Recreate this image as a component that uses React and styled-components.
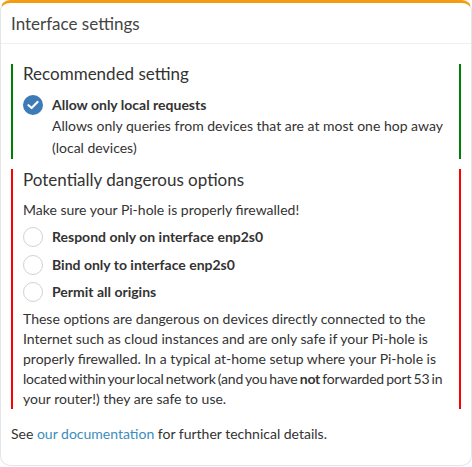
import React from "react"
import styled, { createGlobalStyle } from "styled-components"

const Global = createGlobalStyle`
  body {
    margin: 0;
    background: #fff;
    font-family: Lato, "Liberation Sans", sans-serif;
    font-size: 14px;
    color: #333;
  }
`

const S = {
  Box: styled.div`
    box-sizing: border-box;
    width: 472px;
    height: 466px;
    border: 1px solid #e3e5e9;
    border-top: 3px solid #f39c12;
    border-radius: 10px;
    background: #fff;
  `,
  Header: styled.div`
    height: 40px;
    padding: 0 10px;
    display: flex;
    align-items: center;
    border-bottom: 1px solid #f0f0f0;
    font-size: 17px;
    color: #444;
  `,
  Body: styled.div`
    padding: 20px 10px 20px;
  `,
  Fieldset: styled.div`
    border-left: 2px solid ${(p) => p.$color};
    border-right: 2px solid ${(p) => p.$color};
    padding: ${(p) => (p.$pt || 0)}px 10px 0;
    margin-bottom: ${(p) => p.$mb || 0}px;
  `,
  Legend: styled.div`
    font-size: 17px;
    line-height: 20px;
    color: #333;
  `,
  Note: styled.div`
    margin-top: 10px;
    line-height: 20px;
  `,
  Option: styled.label`
    display: flex;
    align-items: flex-start;
    gap: 9px;
    margin-top: ${(p) => p.$mt}px;
  `,
  Circle: styled.span`
    box-sizing: border-box;
    flex: none;
    width: 20px;
    height: 20px;
    border-radius: 50%;
    border: ${(p) => (p.$checked ? "none" : "1px solid #d2d2d2")};
    background: ${(p) => (p.$checked ? "#3c7ab8" : "#fff")};
    display: flex;
    align-items: center;
    justify-content: center;
  `,
  Label: styled.div`
    line-height: 20px;
    b {
      font-weight: 700;
      color: #333;
    }
  `,
  Desc: styled.div`
    line-height: 22px;
  `,
  Text: styled.p`
    margin: 7px 0 0;
    line-height: 20px;
    white-space: nowrap;
  `,
  Tight: styled.span`
    letter-spacing: -0.2px;
    word-spacing: -1.2px;
  `,
  Footer: styled.p`
    margin: 15px 0 0;
    line-height: 20px;
    a {
      color: #3c8dbc;
      text-decoration: none;
    }
  `,
}

const Check = () => (
  <svg width="12" height="10" viewBox="0 0 12 10">
    <path d="M1.5 5.2 L4.6 8 L10.5 2" fill="none" stroke="#fff" strokeWidth="2.2" strokeLinecap="round" strokeLinejoin="round" />
  </svg>
)

export default function App() {
  const radios = [
    { label: "Respond only on interface enp2s0", mt: 7 },
    { label: "Bind only to interface enp2s0", mt: 8 },
    { label: "Permit all origins", mt: 7 },
  ]
  return (
    <>
      <Global />
      <S.Box>
        <S.Header>Interface settings</S.Header>
        <S.Body>
          <S.Fieldset $color="#008000" $mb={10}>
            <S.Legend>Recommended setting</S.Legend>
            <S.Option $mt={11}>
              <S.Circle $checked>
                <Check />
              </S.Circle>
              <S.Label>
                <b>Allow only local requests</b>
                <S.Desc>
                  Allows only queries from devices that are at most one hop away
                  <br />
                  (local devices)
                </S.Desc>
              </S.Label>
            </S.Option>
          </S.Fieldset>
          <S.Fieldset $color="#ff0000" $pt={1}>
            <S.Legend>Potentially dangerous options</S.Legend>
            <S.Note>Make sure your Pi-hole is properly firewalled!</S.Note>
            {radios.map(({ label, mt }) => (
              <S.Option key={label} $mt={mt}>
                <S.Circle />
                <S.Label>
                  <b>{label}</b>
                </S.Label>
              </S.Option>
            ))}
            <S.Text>
              These options are dangerous on devices directly connected to the
              <br />
              Internet such as cloud instances and are only safe if your Pi-hole is
              <br />
              properly firewalled. In a typical at-home setup where your Pi-hole is
              <br />
              <S.Tight>
                located within your local network (and you have <b>not</b> forwarded port 53 in
              </S.Tight>
              <br />
              your router!) they are safe to use.
            </S.Text>
          </S.Fieldset>
          <S.Footer>
            See <a href="#">our documentation</a> for further technical details.
          </S.Footer>
        </S.Body>
      </S.Box>
    </>
  )
}
